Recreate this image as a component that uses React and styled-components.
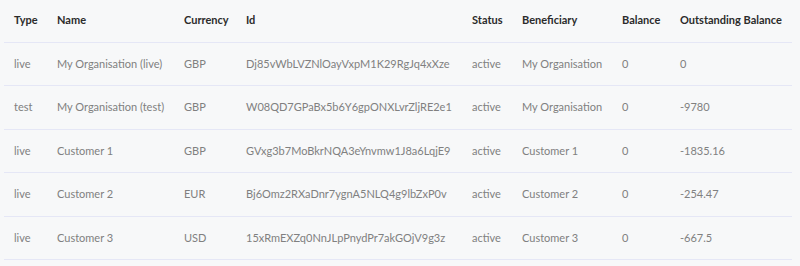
import React from 'react';
import styled, { createGlobalStyle } from 'styled-components';

const GlobalStyle = createGlobalStyle`
  html, body {
    margin: 0;
    padding: 0;
    background: #f7f8f9;
  }
  body {
    font-family: Lato, "Open Sans", sans-serif;
  }
`;

const columns = [
  { key: 'type', label: 'Type', width: 43 },
  { key: 'name', label: 'Name', width: 127 },
  { key: 'currency', label: 'Currency', width: 62 },
  { key: 'id', label: 'Id', width: 226 },
  { key: 'status', label: 'Status', width: 50 },
  { key: 'beneficiary', label: 'Beneficiary', width: 100 },
  { key: 'balance', label: 'Balance', width: 58 },
  { key: 'outstanding', label: 'Outstanding Balance', width: 122 },
];

const accounts = [
  { type: 'live', name: 'My Organisation (live)', currency: 'GBP', id: 'Dj85vWbLVZNlOayVxpM1K29RgJq4xXze', status: 'active', beneficiary: 'My Organisation', balance: '0', outstanding: '0' },
  { type: 'test', name: 'My Organisation (test)', currency: 'GBP', id: 'W08QD7GPaBx5b6Y6gpONXLvrZljRE2e1', status: 'active', beneficiary: 'My Organisation', balance: '0', outstanding: '-9780' },
  { type: 'live', name: 'Customer 1', currency: 'GBP', id: 'GVxg3b7MoBkrNQA3eYnvmw1J8a6LqjE9', status: 'active', beneficiary: 'Customer 1', balance: '0', outstanding: '-1835.16' },
  { type: 'live', name: 'Customer 2', currency: 'EUR', id: 'Bj6Omz2RXaDnr7ygnA5NLQ4g9lbZxP0v', status: 'active', beneficiary: 'Customer 2', balance: '0', outstanding: '-254.47' },
  { type: 'live', name: 'Customer 3', currency: 'USD', id: '15xRmEXZq0NnJLpPnydPr7akGOjV9g3z', status: 'active', beneficiary: 'Customer 3', balance: '0', outstanding: '-667.5' },
];

function App() {
  return (
    <Page>
      <GlobalStyle />
      <Table>
        <colgroup>
          {columns.map((col) => (
            <col key={col.key} style={{ width: col.width }} />
          ))}
        </colgroup>
        <thead>
          <tr>
            {columns.map((col) => (
              <HeadCell key={col.key}>{col.label}</HeadCell>
            ))}
          </tr>
        </thead>
        <tbody>
          {accounts.map((acc) => (
            <Row key={acc.id}>
              {columns.map((col) => (
                <Cell key={col.key}>{acc[col.key]}</Cell>
              ))}
            </Row>
          ))}
        </tbody>
      </Table>
    </Page>
  );
}

const Page = styled.div`
  padding: 0 8px 0 4px;
`;

const Table = styled.table`
  width: 788px;
  table-layout: fixed;
  border-collapse: collapse;
  font-size: 11px;
  line-height: 18.5px;
`;

const HeadCell = styled.th`
  text-align: left;
  font-weight: 700;
  color: #2b2b2b;
  padding: 11px 10px 12px;
  border-bottom: 1px solid #e5e7f6;
  white-space: nowrap;
`;

const Row = styled.tr`
  border-bottom: 1px solid #e5e7f6;
`;

const Cell = styled.td`
  color: #808080;
  padding: 12px 10px;
  white-space: nowrap;
  overflow: visible;
`;

export default App;
